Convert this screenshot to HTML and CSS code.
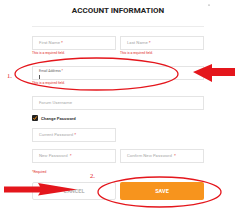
FILE: index.html
```html
<!DOCTYPE html>
<html lang="en">
<head>
    <meta charset="UTF-8">
    <meta name="viewport" content="width=device-width, initial-scale=1.0">
    <title>Account Information</title>

    <link rel="stylesheet" href="styles.css">
</head>
<body>
    <main class="page">
        <h1 class="title">ACCOUNT INFORMATION</h1>
        <div class="divider"></div>

        <form class="account-form">
            <div class="row">
                <div class="field">
                    <div class="input">First Name <span class="star">*</span></div>
                    <div class="error">This is a required field.</div>
                </div>
                <div class="field">
                    <div class="input">Last Name <span class="star">*</span></div>
                    <div class="error">This is a required field.</div>
                </div>
            </div>

            <div class="field field-email">
                <div class="input input-focus">
                    <span class="float-label">Email Address <span class="star">*</span></span>
                    <span class="cursor"></span>
                </div>
                <div class="error">This is a required field.</div>
            </div>

            <div class="field field-forum">
                <div class="input">Forum Username</div>
            </div>

            <label class="check-row">
                <span class="checkbox">
                    <svg viewBox="0 0 6 6" width="6" height="6"><path d="M1.3 3.2 L2.5 4.4 L4.8 1.4" fill="none" stroke="#f7941d" stroke-width="1"/></svg>
                </span>
                Change Password
            </label>

            <div class="row row-current">
                <div class="input">Current Password <span class="star">*</span></div>
            </div>

            <div class="row row-new">
                <div class="input">New Password &nbsp;<span class="star">*</span></div>
                <div class="input">Confirm New Password &nbsp;<span class="star">*</span></div>
            </div>

            <div class="required-note">*Required</div>

            <div class="row row-actions">
                <button type="button" class="btn btn-cancel">CANCEL</button>
                <button type="button" class="btn btn-save">SAVE</button>
            </div>
        </form>
    </main>

    <!-- red markup drawn on top of the screenshot -->
    <svg class="markup" viewBox="0 0 237 213" width="237" height="213">
        <circle cx="209" cy="5" r="0.6" fill="#666"/>
        <ellipse cx="96.5" cy="74" rx="81.5" ry="16" fill="none" stroke="#e4161c" stroke-width="1.3"/>
        <polygon points="193,72 212,64 212,68 235,68 235,76 212,76 212,82" fill="#e4161c"/>
        <text x="7" y="78" class="mark-num">1.</text>
        <ellipse cx="159.5" cy="192" rx="61.5" ry="15" fill="none" stroke="#e4161c" stroke-width="1.3"/>
        <polygon points="4,186.5 40,186.5 38,183 77,189.5 38,195.5 40,192.5 4,192.5" fill="#e4161c"/>
        <text x="90" y="177.5" class="mark-num">2.</text>
    </svg>
</body>
</html>
```

FILE: styles.css
```css
/* Basic Reset */
* {
    margin: 0;
    padding: 0;
    box-sizing: border-box;
    font-family: Roboto, Arial, sans-serif;
}

body {
    background-color: #fff;
    color: #333;
    width: 237px;
    height: 213px;
    overflow: hidden;
    position: relative;
}

/* Page */
.page {
    width: 172px;
    margin-left: 32px;
    padding-top: 6px;
}

.title {
    font-size: 8px;
    line-height: 10px;
    font-weight: 700;
    text-align: center;
    color: #222;
}

.divider {
    margin-top: 10px;
    height: 1px;
    background: #ececec;
}

/* Form */
.account-form {
    display: flex;
    flex-direction: column;
    margin-top: 9px;
}

.row {
    display: grid;
    grid-template-columns: 84px 84px;
    gap: 4px;
}

.input {
    height: 14px;
    border: 1px solid #e4e4e4;
    background: #fff;
    padding-left: 6px;
    font-size: 4.3px;
    line-height: 12px;
    color: #a8a8a8;
    white-space: nowrap;
}

.star {
    color: #e02b27;
}

.error {
    margin-top: 1px;
    font-size: 3.3px;
    line-height: 4px;
    color: #e02b27;
}

.field-email {
    margin-top: 11px;
}

.input-focus {
    position: relative;
    line-height: 5px;
    padding-top: 1.5px;
}

.float-label {
    display: block;
    font-size: 3.4px;
    color: #666;
}

.cursor {
    display: block;
    width: 0.5px;
    height: 4px;
    margin-top: 1px;
    background: #555;
}

.field-forum {
    margin-top: 11px;
}

.check-row {
    display: flex;
    align-items: center;
    gap: 3px;
    margin-top: 5px;
    height: 6px;
    font-size: 4.3px;
    font-weight: 700;
    color: #444;
}

.checkbox {
    display: flex;
    width: 6px;
    height: 6px;
    background: #222;
    border-radius: 1px;
}

.row-current {
    margin-top: 7px;
}

.row-new {
    margin-top: 7px;
}

.required-note {
    margin-top: 7px;
    font-size: 3.3px;
    line-height: 4px;
    color: #e02b27;
}

.row-actions {
    margin-top: 8px;
}

.btn {
    height: 18px;
    border-radius: 2px;
    font-size: 5.5px;
    font-weight: 700;
    cursor: pointer;
}

.btn-cancel {
    background: #fff;
    border: 1px solid #e4e4e4;
    color: #b5b5b5;
}

.btn-save {
    background: #f7941d;
    border: none;
    color: #fff;
}

/* Red markup layer */
.markup {
    position: absolute;
    left: 0;
    top: 0;
}

.mark-num {
    font-family: "Liberation Serif", serif;
    font-size: 6.5px;
    fill: #e4161c;
}
```
